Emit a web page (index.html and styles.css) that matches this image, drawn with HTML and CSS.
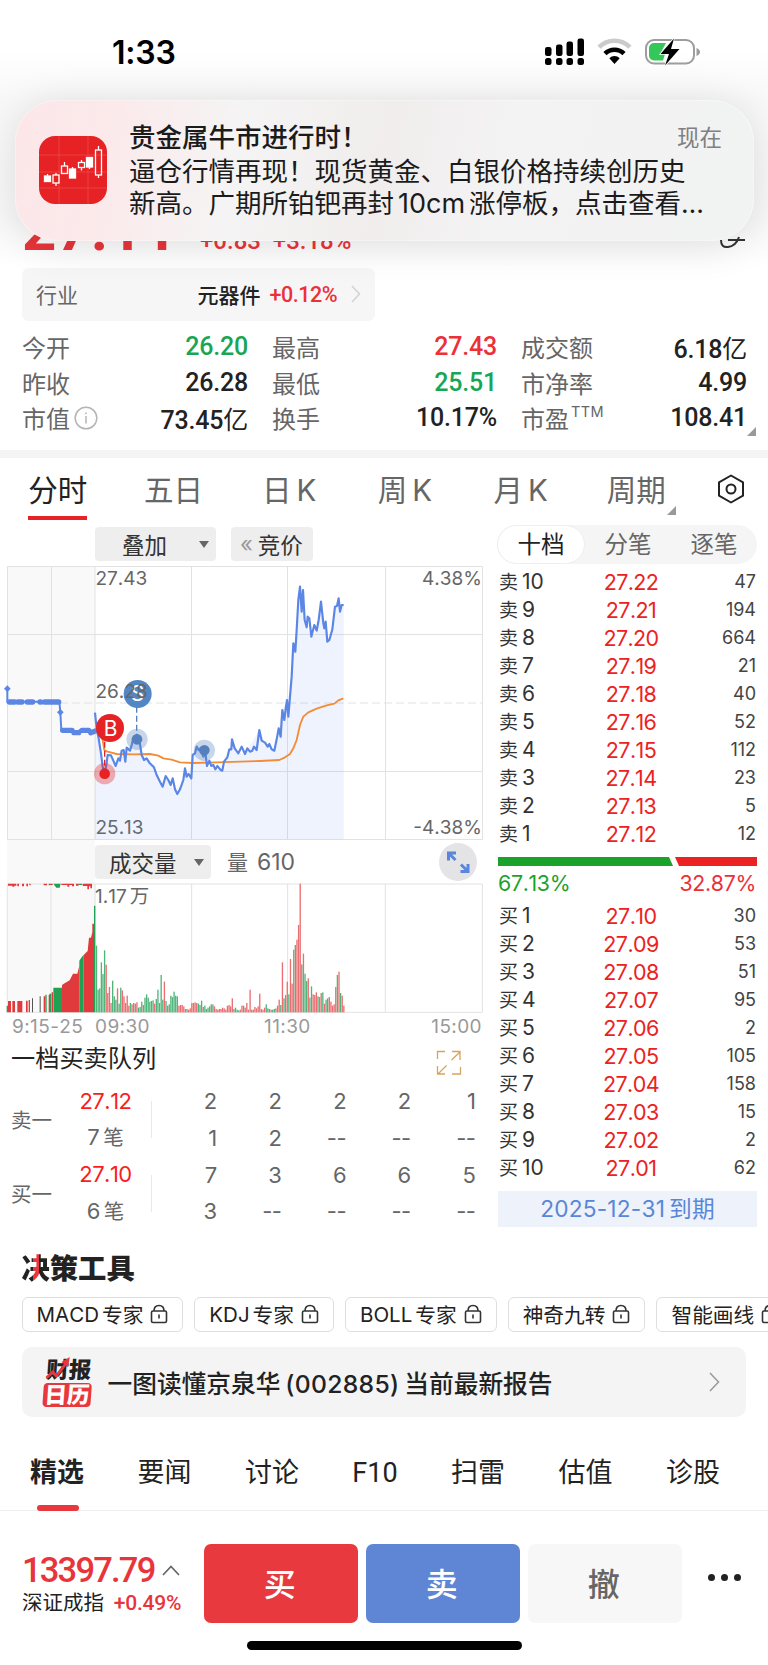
FILE: index.html
```html
<!DOCTYPE html>
<html lang="zh-CN">
<head>
  <meta charset="UTF-8">
  <meta name="viewport" content="width=device-width, initial-scale=1.0">
  <title>京泉华 002885</title>
  <link rel="stylesheet" href="styles.css">
</head>
<body>

  <!-- Status bar -->
  <div class="status-bar">
    <span class="clock">1:33</span>
    <svg class="status-icons" width="158" height="30" viewBox="0 0 158 30">
      <g>
        <rect x="0" y="10" width="6.5" height="9" rx="2.2"/>
        <rect x="11" y="7.5" width="6.5" height="11.5" rx="2.2"/>
        <rect x="21.5" y="4.5" width="6.5" height="14.5" rx="2.2"/>
        <rect x="32.5" y="1.5" width="6.5" height="17.5" rx="2.2"/>
        <rect x="0" y="21" width="6.5" height="7" rx="2.5"/>
        <rect x="11" y="21" width="6.5" height="7" rx="2.5"/>
        <rect x="21.5" y="21" width="6.5" height="7" rx="2.5"/>
        <rect x="32.5" y="21" width="6.5" height="7" rx="2.5"/>
      </g>
      <g fill="none" stroke-width="4.6">
        <path d="M54 10.2a22 22 0 0 1 31 0" stroke="#cbcbcb"/>
        <path d="M60 16.6a13.5 13.5 0 0 1 19 0" stroke="#000"/>
      </g>
      <path d="M64.3 21.2a7.5 7.5 0 0 1 10.4 0L69.5 27z"/>
      <rect x="101" y="3" width="48" height="23.5" rx="8" fill="none" stroke="#9d9d9d" stroke-width="2"/>
      <path d="M109 6h12l-6 11h5l-2 6.5h-9a5 5 0 0 1-5-5V11a5 5 0 0 1 5-5z" fill="#34c759"/>
      <path d="M151.5 11q3.5 1.3 3.5 4t-3.5 4z" fill="#9d9d9d"/>
      <path d="M129 1.5L115.5 17h8.5l-4 11.5L134.5 12H126z" stroke="#fff" stroke-width="1.5" paint-order="stroke"/>
    </svg>
  </div>

  <!-- Push notification -->
  <div class="notification">
    <svg class="app-icon" width="68" height="68" viewBox="0 0 68 68">
      <rect width="68" height="68" rx="16" fill="#e62225"/>
      <path d="M20 0v68M49 0v68M0 19h68M0 36h68M0 52h68" stroke="#ee4a4c" stroke-width=".7"/>
      <g stroke="#fff" stroke-width="1.3" fill="#fff">
        <path d="M8.5 38v8M33.5 31v10M50.5 31v2M17 37v2M17 47v3M25.5 26v4M42.5 24v2.5M42.5 31.5v3M59.5 10v4M59.5 39v3"/>
        <rect x="5.5" y="40" width="6" height="5.5"/>
        <rect x="30.5" y="33" width="6" height="9"/>
        <rect x="47.5" y="21.5" width="6" height="9.5"/>
        <g fill="none">
          <rect x="14" y="39" width="6" height="8"/>
          <rect x="22.5" y="30" width="6" height="7.5"/>
          <rect x="39.5" y="26.5" width="6" height="5"/>
          <rect x="56.5" y="14" width="6" height="25"/>
        </g>
      </g>
    </svg>
    <div class="notice-text">
      <div class="notice-head"><b>贵金属牛市进行时！</b><span>现在</span></div>
      <p>逼仓行情再现！现货黄金、白银价格持续创历史</p>
      <p>新高。广期所铂钯再封<i>10cm</i>涨停板，点击查看…</p>
    </div>
  </div>

  <!-- Quote -->
  <section class="quote">
    <div class="price-row">
      <span class="last">27.11</span>
      <span class="change">+0.83&nbsp; +3.18%</span>
      <svg width="28" height="34" viewBox="0 0 28 34" fill="none" stroke="#333" stroke-width="2"><path d="M10 16h17M3 16q0 8 7 7 8-1 11-10"/></svg>
    </div>
    <div class="industry">
      <span class="muted">行业</span>
      <span class="name">元器件</span>
      <span class="red">+0.12%</span>
      <svg width="10" height="18" viewBox="0 0 10 18" fill="none" stroke="#d2d2d2" stroke-width="1.5"><path d="M1 1l7.5 8L1 17"/></svg>
    </div>
    <div class="stats">
      <div><label>今开</label><b class="green">26.20</b></div>
      <div><label>最高</label><b class="red">27.43</b></div>
      <div><label>成交额</label><b>6.18<i>亿</i></b></div>
      <div><label>昨收</label><b>26.28</b></div>
      <div><label>最低</label><b class="green">25.51</b></div>
      <div><label>市净率</label><b>4.99</b></div>
      <div><label>市值</label>
        <svg class="info" width="24" height="24" viewBox="0 0 24 24" fill="none" stroke="#b5b5b5" stroke-width="1.5"><circle cx="12" cy="12" r="10.8"/><path d="M12 10v7.5M12 6.5v1.8"/></svg>
        <b>73.45<i>亿</i></b></div>
      <div><label>换手</label><b>10.17%</b></div>
      <div><label>市盈<sup>TTM</sup></label><b>108.41</b></div>
    </div>
    <i class="corner stats-corner"></i>
  </section>

  <!-- Period tabs -->
  <nav class="period-tabs">
    <span class="active">分时</span>
    <span>五日</span>
    <span>日<i>K</i></span>
    <span>周<i>K</i></span>
    <span>月<i>K</i></span>
    <span>周期<i class="corner"></i></span>
    <svg width="28" height="30" viewBox="0 0 28 30" fill="none" stroke="#222" stroke-width="2"><path d="M14 1.5l12 6.8v13.4l-12 6.8-12-6.8V8.3z" stroke-linejoin="round"/><circle cx="14" cy="15" r="4.5"/></svg>
  </nav>

  <main class="board">
    <div class="charts">
      <div class="toolbar">
        <span class="pill overlay">叠加<i class="caret"></i></span>
        <span class="pill auction"><em>«</em>竞价</span>
      </div>

      <!-- Minute chart -->
      <svg class="minute" width="490" height="276" viewBox="0 0 490 276">
        <rect x="7" y="1" width="88" height="275" fill="#f9f9f9"/>
        <g fill="none" stroke="#e2e2e2">
          <path d="M7.5 1.5H482.5V274.5H7.5zM51.5 1V274M95 1V274M191.5 1V274M287.5 1V274M385.5 1V274M7 69.5H482M7 206.5H482"/>
          <path d="M60 138H482" stroke-dasharray="8 4"/>
        </g>
        <g class="labels">
          <text x="95.5" y="20">27.43</text>
          <text x="482" y="20" text-anchor="end">4.38%</text>
          <text x="95.5" y="268.5">25.13</text>
          <text x="482" y="268.5" text-anchor="end">-4.38%</text>
        </g>
        <g transform="translate(0 -45) scale(.33333)">
          <path fill="rgba(90,134,232,.1)" d="M285,958V578L295,650 303,700 313,760 323,705 333,706 347,738 365,692 376,725 380,683 395,675 400,655 418,660 425,705 440,715 462,742 480,785 488,800 497,768 512,795 532,822 550,780 555,745 574,775 578,705 590,680 615,690 621,738 646,748 667,752 688,688 696,658 715,700 735,702 778,630 795,668 823,692 836,625 847,570 861,540 865,590 875,470 880,370 886,395 900,200 914,300 920,322 934,350 950,332 963,245 982,365 997,328 1005,260 1031,255V958z"/>
          <path fill="none" stroke="#f28c37" stroke-width="5.5" stroke-linejoin="round" d="M302,625L313,690 320,694 350,702 400,703 450,702 475,707 490,715 515,719 540,727 580,729 650,727 780,723 838,720 855,712 870,702 880,685 890,660 900,615 910,590 925,577 950,566 980,556 1003,551 1015,541 1030,535"/>
          <path fill="none" stroke="#5b86e5" stroke-width="6.5" stroke-linejoin="round" d="M285,578L290,625 295,650 303,700 308,740 313,760 319,735 323,705 333,706 340,722 347,738 355,715 360,722 365,692 371,690 376,725 380,683 390,692 395,675 400,655 410,645 418,660 425,705 432,720 440,715 448,728 455,735 462,742 470,765 480,785 488,800 497,768 505,780 512,795 518,775 525,808 532,822 540,808 550,780 555,745 560,770 566,762 574,775 578,705 585,700 590,680 596,690 602,685 610,710 615,690 621,738 628,722 634,738 640,735 646,748 652,738 662,750 667,752 672,725 682,712 688,688 694,688 696,658 704,685 715,700 725,680 735,702 742,685 750,695 757,692 762,680 770,690 778,630 785,662 795,668 803,680 808,672 815,688 823,692 830,658 836,625 842,650 847,570 853,600 858,560 861,540 865,590 870,530 875,470 880,370 886,395 890,330 895,240 900,200 905,275 909,210 914,300 920,322 923,290 928,295 934,350 943,315 950,332 956,300 963,245 970,310 973,325 977,305 982,365 988,360 997,328 1005,260 1011,258 1016,235 1020,275 1025,255 1031,255"/>
          <path fill="none" stroke="#5b86e5" stroke-width="6" d="M22,506V545H178L181,577 184,630H215L225,640 240,630H268L275,640 287,632"/>
          <path fill="none" stroke="#5b86e5" stroke-width="16" stroke-linecap="round" d="M28,546h16M54,546h12M82,546h16M120,546h2M134,546h42M188,631h28M222,638h14M246,631h20M272,638l14,-5"/>
          <path fill="#5b86e5" d="M22,496l10,10-10,10-10-10zM181,567l10,10-10,10-10-10z"/>
          <path d="M410,560V650" stroke="#5580bd" stroke-width="4" stroke-dasharray="18 9"/>
          <path d="M314,665V750" stroke="#e62225" stroke-width="4" stroke-dasharray="18 9"/>
          <circle cx="411" cy="658" r="32" fill="#5580bd" opacity=".32"/><circle cx="411" cy="658" r="16" fill="#5580bd"/>
          <circle cx="613" cy="691" r="32" fill="#5580bd" opacity=".32"/><circle cx="613" cy="691" r="16" fill="#5580bd"/>
          <circle cx="314" cy="761" r="32" fill="#e62225" opacity=".35"/><circle cx="314" cy="761" r="16" fill="#e62225"/>
          <circle cx="413" cy="522" r="42" fill="#5286c5"/>
          <circle cx="330" cy="624" r="42" fill="#e62225"/>
        </g>
        <g class="badges">
          <text x="137.5" y="136" text-anchor="middle">S</text>
          <text x="110.5" y="170.5" text-anchor="middle">B</text>
        </g>
        <text class="mid-label" x="95.5" y="133">26.28</text>
      </svg>

      <div class="toolbar volume-bar">
        <span class="pill volume">成交量<i class="caret"></i></span>
        <span class="vol-now">量 <i>610</i></span>
        <svg width="38" height="38" viewBox="0 0 38 38"><circle cx="19" cy="19" r="19" fill="#e4e4e6"/><g fill="none" stroke="#5a86dc" stroke-width="3"><path d="M9.5 17.5v-7.500h7.500M10 10.500l6.500 6.500M29 21v7.500h-7.500M28.500 28l-6.500-6.500"/></g></svg>
      </div>

      <!-- Volume chart -->
      <svg class="volumes" width="490" height="131" viewBox="0 0 1470 393">
        <rect x="22" y="0" width="264" height="388" fill="#f9f9f9"/>
        <path d="M22,3H1447V388H22zM153,3V388M285,3V388M575,3V388M863,3V388M1156,3V388" fill="none" stroke="#e2e2e2" stroke-width="3"/>
        <g fill="#e13a3c">
          <path d="M24,388v-34h9v34zM37,388v-34h8v34zM52,388v-34h15v34zM78,388v-35h5v35zM86,388v-37h4v37zM131,388v-48h5v48zM146,388v-52h4v52zM155,388v-60h4v60zM186,388v-82l9-6 14-8 10-20h13l6-24v140zM251,388v-172l12-12 4-40h6l4-16v-26h5v266z"/>
          <path d="M24,2h25v6h-6v3h-6V8H24zM52,2h5v8h-5zM66,2h6v8h-6zM79,2h5v8h-5zM88,2h4v5h-4zM131,2h10v5h-10zM150,2h8v4h-8zM184,2h38v8h-6V6h-8v5h-6V6h-18zM228,2h8v6h-8zM248,2h28v14h-5v-6h-4v9h-5v-10h-14z"/>
        </g>
        <g fill="#1fa053">
          <path d="M20,388v-20h4v20zM136,388v-53h4v53zM148,388v-56h6v56zM160,388v-74h26v74zM238,388v-155l7-10 6-8v173zM282,388V68h4v320z"/>
          <path d="M146,2h4v5h-4zM160,2h22l-3,12h-10zM236,2h10v4h-10z"/>
        </g>
        <path d="M96,388v-42h3v42zM119,388v-48h3v48z" fill="#555"/>
        <g id="volume-bars"></g>
      </svg>
      <div class="axis"><span>9:15-25</span><span>09:30</span><span>11:30</span><span>15:00</span></div>
      <span class="vol-max"><i>1.17</i>万</span>

      <!-- Order queue -->
      <div class="queue-title">一档买卖队列
        <svg width="26" height="26" viewBox="0 0 26 26" fill="none" stroke="#d6a55c" stroke-width="1.3"><path d="M1.5 9V1.5H9M16 1.5h8V10M24.5 17v7H16M9 24H1.5v-8M24 2l-8.5 8M2 24l8.5-8.5"/></svg>
      </div>
      <div class="queue">
        <div class="side">卖一</div>
        <div class="level"><span>27.12</span><em><i>7</i>笔</em></div>
        <div class="lots">
          <span>2</span><span>2</span><span>2</span><span>2</span><span>1</span>
          <span>1</span><span>2</span><span>--</span><span>--</span><span>--</span>
        </div>
      </div>
      <div class="queue">
        <div class="side">买一</div>
        <div class="level"><span>27.10</span><em><i>6</i>笔</em></div>
        <div class="lots">
          <span>7</span><span>3</span><span>6</span><span>6</span><span>5</span>
          <span>3</span><span>--</span><span>--</span><span>--</span><span>--</span>
        </div>
      </div>
    </div>

    <!-- Ten-level order book -->
    <aside class="book">
      <div class="book-tabs"><span class="active">十档</span><span>分笔</span><span>逐笔</span></div>
      <div class="rows" id="asks"></div>
      <div class="ratio"><i class="sell"></i><i class="buy"></i></div>
      <div class="ratio-text"><span>67.13%</span><span class="red">32.87%</span></div>
      <div class="rows" id="bids"></div>
      <div class="expire"><i>2025-12-31</i>到期</div>
    </aside>
  </main>

  <!-- Tools -->
  <section class="tools">
    <h2><span>决</span>策工具</h2>
    <div class="chips">
      <span><i>MACD</i>专家<svg class="lock"><use href="#lock"/></svg></span>
      <span><i>KDJ</i>专家<svg class="lock"><use href="#lock"/></svg></span>
      <span><i>BOLL</i>专家<svg class="lock"><use href="#lock"/></svg></span>
      <span>神奇九转<svg class="lock"><use href="#lock"/></svg></span>
      <span>智能画线<svg class="lock"><use href="#lock"/></svg></span>
    </div>
    <div class="report">
      <div class="report-logo"><b>财报</b><b class="cal">日历</b>
        <svg width="28" height="24" viewBox="0 0 28 24"><path d="M1 21l6-6 4 4 9-13" fill="none" stroke="#e8383d" stroke-width="3"/><path d="M15 5l8-5-1 10z" fill="#e8383d"/></svg>
      </div>
      <span class="report-text">一图读懂京泉华<i>(002885)</i>当前最新报告</span>
      <svg width="11" height="20" viewBox="0 0 11 20" fill="none" stroke="#999" stroke-width="1.5"><path d="M1 1l8.5 9L1 19"/></svg>
    </div>
  </section>

  <nav class="info-tabs">
    <span class="active">精选</span><span>要闻</span><span>讨论</span><span class="latin">F10</span><span>扫雷</span><span>估值</span><span>诊股</span>
  </nav>

  <!-- Trade bar -->
  <footer class="trade">
    <div class="index">
      <div class="index-value">13397.79<svg width="18" height="11" viewBox="0 0 18 11" fill="none" stroke="#666" stroke-width="1.7"><path d="M1 10l8-8.5L17 10"/></svg></div>
      <div class="index-name">深证成指 <b>+0.49%</b></div>
    </div>
    <button class="btn-buy">买</button>
    <button class="btn-sell">卖</button>
    <button class="btn-cancel">撤</button>
    <div class="more"><i></i><i></i><i></i></div>
  </footer>
  <div class="home-bar"></div>

  <svg class="defs" width="0" height="0">
    <symbol id="lock" viewBox="0 0 18 20"><g fill="none" stroke="#333" stroke-width="1.6"><rect x="1.5" y="7" width="15" height="11.5" rx="1.5"/><path d="M4 7q0-5.500 5-5.500T14 7M9 10.500v4"/></g></symbol>
  </svg>

  <script src="script.js"></script>
</body>
</html>
```
FILE: styles.css
```css
/* General Styles */
* {
  margin: 0;
  padding: 0;
  box-sizing: border-box;
}

body {
  position: relative;
  width: 768px;
  height: 1665px;
  overflow: hidden;
  background: #fff;
  color: #222;
  font-family: Inter, "Noto Sans CJK SC", sans-serif;
  font-kerning: none;
}

i, em {
  font-style: normal;
}

svg {
  display: block;
  flex: none;
}

.red { color: #ec3038 !important; }
.green { color: #17a655 !important; }
.muted { color: #666; }

.corner {
  width: 0;
  height: 0;
  border-left: 9px solid transparent;
  border-bottom: 9px solid #999;
}

/* Status bar */
.status-bar {
  height: 100px;
  padding: 33px 65px 0 112px;
  display: flex;
  justify-content: space-between;
  background: linear-gradient(#fff 50%, #f8f8f8);
}

.clock {
  font-size: 32px;
  line-height: 39px;
  font-weight: 600;
  color: #000;
  letter-spacing: -0.2px;
}

.status-icons {
  margin-top: 4px;
}

/* Notification */
.notification {
  position: absolute;
  z-index: 2;
  left: 15px;
  top: 100px;
  width: 739px;
  height: 141px;
  padding: 21px 32px 0 25px;
  display: flex;
  border-radius: 42px;
  background: linear-gradient(100deg, #fce6e8 0%, #fbeaeb 14%, #f5f4f4 30%, #f0edec 50%, #f4f3f4 65%, #f1f2f2 100%);
  box-shadow: 0 4px 40px rgba(0, 0, 0, .12), inset 0 0 1px 1px rgba(255, 255, 255, .35);
}

.app-icon {
  margin: 15px 22px 0 -1px;
}

.notice-text {
  flex: 1;
  font-size: 26.5px;
  line-height: 32px;
  color: #1b1b1b;
  white-space: nowrap;
}

.notice-text p {
  margin-right: -30px;
}

.notice-text i {
  font-size: 27px;
  margin: 0 4px;
}

.notice-head {
  display: flex;
  justify-content: space-between;
}

.notice-head b {
  font-weight: 500;
}

.notice-head span {
  font-size: 22.5px;
  line-height: 34px;
  color: #808080;
}

/* Quote */
.quote {
  position: relative;
  height: 350px;
  padding: 0 22px;
}

.price-row {
  height: 168px;
  display: flex;
  align-items: flex-end;
  margin: 0 -22px;
  padding: 0 22px 10px;
  color: #e8353b;
  background: linear-gradient(#f8f8f8 70%, #fff);
}

.last {
  width: 178px;
  font: 700 60px/60px Roboto, sans-serif;
  margin-bottom: -2px;
}

.change {
  flex: 1;
  margin-bottom: 2px;
  font: 500 24px/30px Roboto, sans-serif;
}

.industry {
  width: 353px;
  height: 53px;
  display: flex;
  align-items: center;
  padding: 0 14px 1px 14px;
  border-radius: 7px;
  background: #f6f6f6;
  font-size: 21px;
}

.industry .name {
  margin-left: auto;
  font-weight: 500;
}

.industry .red {
  margin: 0 14px 0 9px;
  font: 500 21.5px Roboto, sans-serif;
  letter-spacing: -0.5px;
}

.stats {
  display: grid;
  grid-template-columns: 226px 225px 226px;
  grid-template-rows: repeat(3, 35.5px);
  column-gap: 24px;
  padding-top: 8px;
  margin-right: -4px;
}

.stats div {
  display: flex;
  align-items: center;
}

.stats label {
  font-size: 24px;
  color: #666;
}

.stats sup {
  font: 14.5px/10px Inter, sans-serif;
  letter-spacing: .4px;
  vertical-align: 11px;
  margin-left: 2px;
}

.stats b {
  margin-left: auto;
  font: 500 25px Roboto, "Noto Sans CJK SC", sans-serif;
  letter-spacing: -0.2px;
}

.stats b i {
  font-weight: 400;
}

.info {
  margin-left: 4px;
}

.stats-corner {
  position: absolute;
  right: 12px;
  bottom: 14px;
}

/* Period tabs */
.period-tabs {
  height: 73px;
  display: grid;
  grid-template-columns: repeat(6, 115.7px) 74px;
  justify-items: center;
  align-items: start;
  border-top: 8px solid #f4f4f4;
  font-size: 29.5px;
  line-height: 42px;
  color: #666;
}

.period-tabs span {
  position: relative;
  height: 62px;
  padding-top: 11px;
}

.period-tabs i {
  margin-left: 5px;
}

.period-tabs .active {
  color: #222;
  border-bottom: 4px solid #e62225;
}

.period-tabs .corner {
  position: absolute;
  right: -10px;
  bottom: 5px;
}

.period-tabs svg {
  margin-top: 16px;
}

/* Charts */
.board {
  display: flex;
  height: 717px;
}

.charts {
  position: relative;
  width: 497px;
}

.toolbar {
  display: flex;
  padding: 4px 0 0 95px;
  height: 42px;
}

.pill {
  height: 34px;
  display: flex;
  align-items: center;
  border-radius: 4px;
  background: #eee;
  font-size: 22.5px;
  color: #333;
}

.pill em {
  margin-right: 5px;
  font-size: 22px;
  color: #999;
}

.overlay {
  width: 121px;
  padding: 0 7px 0 27px;
  justify-content: space-between;
}

.auction {
  margin-left: 15px;
  width: 82px;
  padding-left: 9px;
}

.caret {
  border: 5px solid transparent;
  border-top: 7px solid #666;
  border-bottom: 0;
}

.labels, .mid-label {
  font-size: 19px;
  fill: #666;
}

.badges {
  font-size: 21px;
  fill: #fff;
}

.volume-bar {
  position: relative;
  align-items: flex-start;
  padding-left: 95px;
  background: linear-gradient(#f9f9f9, #f9f9f9) 7px 0 / 88px 42px no-repeat;
}

.volume {
  width: 116px;
  padding: 0 7px 0 14px;
  justify-content: space-between;
}

.vol-now {
  margin-left: 16px;
  font-size: 21px;
  line-height: 34px;
  color: #666;
  flex: 1;
}

.vol-now i {
  margin-left: 3px;
  font-size: 23px;
}

.volume-bar svg {
  margin: -2px 20px 0 0;
}

.vol-max {
  position: absolute;
  left: 95px;
  top: 361px;
  font-size: 19.5px;
  line-height: 24px;
  color: #666;
}

.vol-max i {
  font-size: 19px;
  margin-right: 3px;
}

.axis {
  display: flex;
  height: 26px;
  padding: 0 15px 0 12px;
  font-size: 19px;
  line-height: 25px;
  letter-spacing: .4px;
  color: #999;
}

.axis span:nth-child(1) { width: 83px; }
.axis span:nth-child(2) { width: 169px; }
.axis span:nth-child(4) { margin-left: auto; }

/* Order queue */
.queue-title {
  display: flex;
  height: 43px;
  padding: 0 35px 0 11px;
  font-size: 24.2px;
  line-height: 38px;
  justify-content: space-between;
}

.queue-title svg {
  margin-top: 10px;
}

.queue {
  display: flex;
  height: 73.5px;
  padding-left: 11px;
  font-size: 20.5px;
  color: #666;
  align-items: center;
}

.side {
  width: 48px;
  padding-bottom: 1px;
}

.level {
  width: 93px;
  display: grid;
  line-height: 36.7px;
  text-align: center;
  background: linear-gradient(#e8e8e8, #e8e8e8) 100% 50% / 1px 37px no-repeat;
}

.level span {
  color: #fb1d1d;
}

.level em i {
  margin-right: 4px;
}

.level span, .level i, .lots span {
  font-size: 22px;
  letter-spacing: -0.5px;
}

.lots {
  display: grid;
  grid-template-columns: repeat(5, 64.7px);
  line-height: 36.7px;
  text-align: right;
}

/* Order book */
.book {
  width: 262px;
}

.book-tabs {
  display: flex;
  height: 39px;
  margin: 2px 2px 4px 0;
  border-radius: 20px;
  background: #f5f5f5;
  font-size: 23.5px;
  line-height: 39px;
  text-align: center;
  color: #666;
}

.book-tabs span {
  flex: 1;
}

.book-tabs .active {
  border: 1px solid #eee;
  border-radius: 20px;
  background: #fff;
  line-height: 38px;
  color: #222;
}

.rows div {
  display: grid;
  grid-template-columns: 80px 104px 73px;
  height: 28px;
  line-height: 28px;
  padding-left: 2px;
  font-size: 20.5px;
}

.rows label {
  font-size: 19px;
  color: #333;
}

.rows label i {
  font-size: 21px;
  margin-left: 4px;
}

.rows b {
  font-weight: 400;
  font-size: 21.5px;
  letter-spacing: -0.6px;
  text-align: center;
  color: #ec2222;
}

.rows em {
  font-size: 18px;
  text-align: right;
  color: #444;
}

.ratio {
  display: flex;
  gap: 0;
  height: 9px;
  margin: 9px 2px 4px 1px;
}

.sell {
  width: 175px;
  background: #1aa22b;
  clip-path: polygon(0 0, 171px 0, 175px 100%, 0 100%);
}

.buy {
  flex: 1;
  background: #ec2222;
  clip-path: polygon(2px 0, 100% 0, 100% 100%, 6px 100%);
}

.ratio-text {
  display: flex;
  justify-content: space-between;
  padding: 0 3px 0 1px;
  margin-bottom: 6px;
  font-size: 21.3px;
  line-height: 26px;
  letter-spacing: -0.3px;
  color: #1aa22b;
}

.expire {
  height: 36px;
  margin: 9px 2px 0 1px;
  background: #edf2fb;
  font-size: 22.7px;
  line-height: 36px;
  letter-spacing: .2px;
  text-align: center;
  color: #5a86d8;
}

.expire i {
  margin-right: 4px;
}

/* Tools */
.tools {
  padding: 7px 22px 0 21.5px;
  height: 195px;
  overflow: hidden;
}

.tools h2 {
  font-size: 28.3px;
  font-weight: 900;
  line-height: 44px;
}

.tools h2 span {
  background: linear-gradient(90deg, #222 40%, #e8383d 40%, #e8383d 60%, #222 60%);
  -webkit-background-clip: text;
  color: transparent;
}

.chips {
  display: flex;
  gap: 11px;
  margin: 6px 0 15px;
}

.chips > span {
  flex: none;
  display: flex;
  align-items: center;
  height: 35px;
  padding: 0 14px 1px;
  border: 1.5px solid #dedede;
  border-radius: 6px;
  font-size: 20.7px;
}

.chips i {
  margin-right: 3px;
  font-size: 20.5px;
}

.lock {
  width: 18px;
  height: 20px;
  margin-left: 7px;
}

.report {
  display: flex;
  align-items: center;
  width: 724px;
  height: 70px;
  padding: 0 26px 0 22px;
  border-radius: 10px;
  background: #f4f4f4;
}

.report-logo {
  position: relative;
  width: 48px;
  margin-right: 16px;
  font-size: 22.5px;
  line-height: 24px;
  transform: skewX(-4deg);
}

.report-logo b {
  display: block;
  font-weight: 900;
  text-align: center;
}

.report-logo .cal {
  margin-top: 1px;
  border-radius: 4px;
  background: #e8383d;
  color: #fff;
}

.report-logo svg {
  position: absolute;
  left: 1px;
  top: -1px;
}

.report-text {
  flex: 1;
  font-size: 24.7px;
  font-weight: 500;
}

.report-text i {
  margin: 0 5px;
  letter-spacing: .3px;
}

/* Info tabs */
.info-tabs {
  display: flex;
  justify-content: space-between;
  height: 76px;
  padding: 18px 48px 0 30px;
  border-bottom: 1px solid #eee;
  font-size: 27px;
  line-height: 40px;
}

.info-tabs span {
  position: relative;
}

.info-tabs .latin {
  font-family: Roboto, sans-serif;
}

.info-tabs .active {
  font-weight: 700;
}

.info-tabs .active::after {
  content: "";
  position: absolute;
  left: 7px;
  bottom: -1px;
  width: 42px;
  height: 6px;
  border-radius: 3px;
  background: #e8383d;
}

/* Trade bar */
.trade {
  display: flex;
  gap: 7.5px;
  height: 130px;
  padding: 33px 22px 0;
}

.index {
  width: 174px;
  padding-top: 6px;
}

.index-value {
  display: flex;
  align-items: center;
  gap: 8px;
  font: 500 34.5px/40px Roboto, sans-serif;
  letter-spacing: -1.8px;
  color: #e8353b;
}

.index-name {
  font-size: 20.5px;
  line-height: 26px;
}

.index-name b {
  margin-left: 4px;
  font: 500 21px Roboto, sans-serif;
  letter-spacing: -0.2px;
  color: #e8353b;
}

.trade button {
  width: 154.5px;
  height: 79px;
  padding: 0 2px 3px 0;
  border: 0;
  border-radius: 7px;
  color: #fff;
  font: 500 32px "Noto Sans CJK SC", sans-serif;
}

.btn-buy { background: #e8393e; }
.btn-sell { background: #5f86d4; }

.trade .btn-cancel {
  background: #f7f7f7;
  color: #666;
}

.more {
  display: flex;
  gap: 6px;
  padding: 30px 0 0 18px;
}

.more i {
  width: 7px;
  height: 7px;
  border-radius: 50%;
  background: #222;
}

.home-bar {
  width: 275px;
  height: 9px;
  margin: 0 auto;
  border-radius: 5px;
  background: #000;
}

.defs {
  position: absolute;
}
```
FILE: script.js
```js
// price, lots
const asks = [[27.22, 47], [27.21, 194], [27.20, 664], [27.19, 21], [27.18, 40], [27.16, 52], [27.15, 112], [27.14, 23], [27.13, 5], [27.12, 12]];
const bids = [[27.10, 30], [27.09, 53], [27.08, 51], [27.07, 95], [27.06, 2], [27.05, 105], [27.04, 158], [27.03, 15], [27.02, 2], [27.01, 62]];

function renderRows(id, name, rows, levelOf) {
  document.getElementById(id).innerHTML = rows.map(([price, lots], i) =>
    `<div><label>${name}<i>${levelOf(i)}</i></label><b>${price.toFixed(2)}</b><em>${lots}</em></div>`
  ).join("");
}

renderRows("asks", "卖", asks, i => 10 - i);
renderRows("bids", "买", bids, i => i + 1);

// Minute volumes, negative = falling minute
const volumes = [
  -200, -68, -72, -150, -115, -186, 143, 58, 76, 28, -95, -48, -38, 72, -26, -74, 66, 48, 28, 50,
  20, -28, 24, -28, 26, 30, -14, -16, -32, 22, -44, -54, -44, -32, -34, -36, 26, -40, -68, -28,
  -112, -38, 92, -34, 20, -24, -50, -46, -62, -50, -48, 20, 22, 22, 18, 10, -10, 8, 12, 28,
  28, 30, 28, -26, -22, -35, 16, -20, -10, -14, 18, -24, -24, 18, 10, 8, 10, 10, 14, 12,
  8, 20, 22, 18, 42, -10, -14, -8, -6, 8, 20, -20, 14, 28, 8, 68, -8, 8, 16, 12,
  18, 56, 10, 8, 14, -24, -12, -10, 8, -8, -10, 12, 20, 38, -22, 150, -42, 52, 92, -54,
  160, 86, 188, -202, 218, 262, 386, -144, 176, -116, -94, 102, -44, -78, 54, 52, 60, -48, 46, 58,
  -60, 26, -38, -42, 46, 32, 20, 24, 76, -112, 122, -58, 50, 20
];

document.getElementById("volume-bars").innerHTML = volumes.map((v, i) => {
  const h = Math.abs(v);
  return `<rect x="${(287.5 + i * 4.85).toFixed(1)}" y="${388 - h}" width="4" height="${h}" fill="${v > 0 ? "#ea6e71" : "#50b57b"}"/>`;
}).join("");
```
